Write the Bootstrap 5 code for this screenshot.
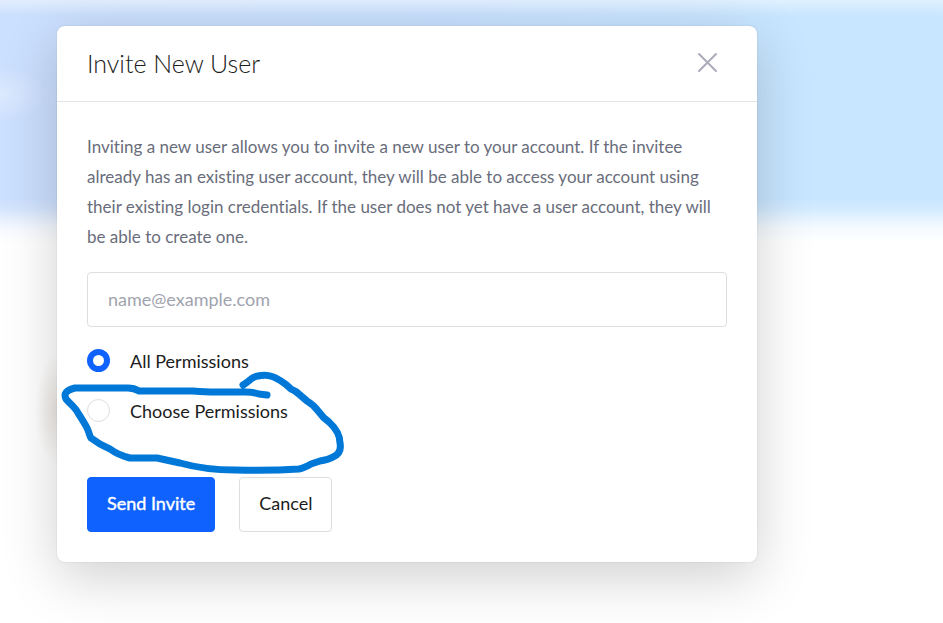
<!DOCTYPE html>
<html lang="en">
<head>
<meta charset="utf-8">
<meta name="viewport" content="width=device-width, initial-scale=1">
<title>Invite New User</title>
<link href="https://cdn.jsdelivr.net/npm/bootstrap@5.3.0/dist/css/bootstrap.min.css" rel="stylesheet">
<style>
  body {
    font-family: Lato, sans-serif;
    font-variant-ligatures: none;
    font-size: 18px;
    line-height: 30px;
    color: #1b1c20;
    background:
      radial-gradient(ellipse 22px 55px at 57px 410px, rgba(120, 90, 60, .14), transparent) no-repeat,
      radial-gradient(ellipse 46px 28px at 0 94px, rgba(255, 255, 255, .35), transparent) no-repeat,
      linear-gradient(to bottom, rgba(255, 255, 255, .45) 0, rgba(255, 255, 255, 0) 16px, rgba(255, 255, 255, 0) 198px, rgba(255, 255, 255, .2) 209px, rgba(255, 255, 255, .8) 227px, #fff 243px),
      linear-gradient(to right, #cbdffe, #c8e1ff 50%, #c8e6ff 85%);
  }
  .invite-page { padding: 26px 57px 61px; }
  .invite-dialog {
    width: 100%;
    max-width: 700px;
    border-radius: 8px;
    box-shadow: 0 15px 55px rgba(0, 0, 0, .19), 0 0 2px rgba(0, 0, 0, .12);
  }
  .invite-head { padding: 19px 38px 20px 30px; border-bottom: 1px solid #e5e5e7; }
  .invite-title { font-size: 25px; font-weight: 300; line-height: 36px; }
  .invite-close { width: 24px; height: 24px; color: #abacb9; line-height: 0; }
  .invite-body { padding: 30px; }
  .invite-text { font-size: 17px; color: #696d7b; margin-bottom: 20px; }
  .invite-field, .invite-btn { height: 55px; border-radius: 4px; font-size: 18px; }
  .invite-field { border-color: #dedee1; margin-bottom: 18px; padding: 0 20px 2px; }
  .invite-field::placeholder { color: #a0a3ae; }
  .invite-options { gap: 20px; }
  .invite-option { gap: 20px; height: 30px; }
  .invite-option label { padding-top: 2px; }
  .invite-option .form-check-input { width: 23px; height: 23px; border: 1px solid #dedee1; }
  .invite-option .form-check-input:checked { background: #fff; border: 6px solid #0f62fe; }
  .invite-btn { border: 1px solid #dedee1; color: #1b1c20; background: #fff; padding: 0 19px 2px; }
  .invite-btn.btn-primary { border-color: #0f62fe; background: #0f62fe; color: #fff; -webkit-text-stroke: .4px #fff; }
  .invite-actions { gap: 24px; margin-top: 52px; }
  .marker { left: 0; top: 340px; width: 310px; height: 120px; pointer-events: none; }
</style>
<script src="https://cdn.jsdelivr.net/npm/bootstrap@5.3.0/dist/js/bootstrap.bundle.min.js"></script>
</head>
<body class="min-vh-100">
<main class="invite-page">
  <section class="invite-dialog bg-white position-relative" role="dialog" aria-labelledby="invite-title">
    <header class="invite-head d-flex align-items-center justify-content-between">
      <h1 class="invite-title mb-0" id="invite-title">Invite New User</h1>
      <button type="button" class="invite-close btn border-0 p-0" aria-label="Close">
        <svg width="24" height="24" viewBox="0 0 24 24" fill="none" stroke="currentColor" stroke-width="2" stroke-linecap="round" aria-hidden="true"><path d="M4 3 21 20M21 3 4 20"/></svg>
      </button>
    </header>
    <form class="invite-body" onsubmit="return false">
      <p class="invite-text">Inviting a new user allows you to invite a new user to your account. If the invitee already has an existing user account, they will be able to access your account using their existing login credentials. If the user does not yet have a user account, they will be able to create one.</p>
      <input type="email" class="invite-field form-control" id="email" placeholder="name@example.com" aria-label="Email address">
      <div class="invite-options d-flex flex-column">
        <div class="invite-option d-flex align-items-center">
          <input class="form-check-input m-0" type="radio" name="permissions" id="perm-all" checked>
          <label for="perm-all">All Permissions</label>
        </div>
        <div class="invite-option d-flex align-items-center">
          <input class="form-check-input m-0" type="radio" name="permissions" id="perm-choose">
          <label for="perm-choose">Choose Permissions</label>
        </div>
      </div>
      <div class="invite-actions d-flex">
        <button type="submit" class="invite-btn btn btn-primary">Send Invite</button>
        <button type="button" class="invite-btn btn">Cancel</button>
      </div>
    </form>
    <svg class="marker position-absolute" viewBox="57 366 310 120" fill="none" stroke="#0078d7" stroke-width="7" stroke-linecap="round" stroke-linejoin="round" aria-hidden="true">
      <path d="M243 385C249 382 252 376 258 376Q270 373 281 381Q286 384 291 389Q296 391 300 395L307 401Q314 405 319 412Q323 418 329 422Q340 432 340 443Q342 453 333 457Q328 460 320 461L311 464Q304 468 299 469Q270 471 235 470Q205 470 180 463L157 458H130Q118 455 110 449Q100 445 91 438C89 435 89 431 86 426Q82 419 78 413C75 407 70 404 66 399Q62 391 75 388H128Q134 388 139 391H193Q206 392 215 392H245Q253 392 259 394L267 395"/>
    </svg>
  </section>
</main>
</body>
</html>
